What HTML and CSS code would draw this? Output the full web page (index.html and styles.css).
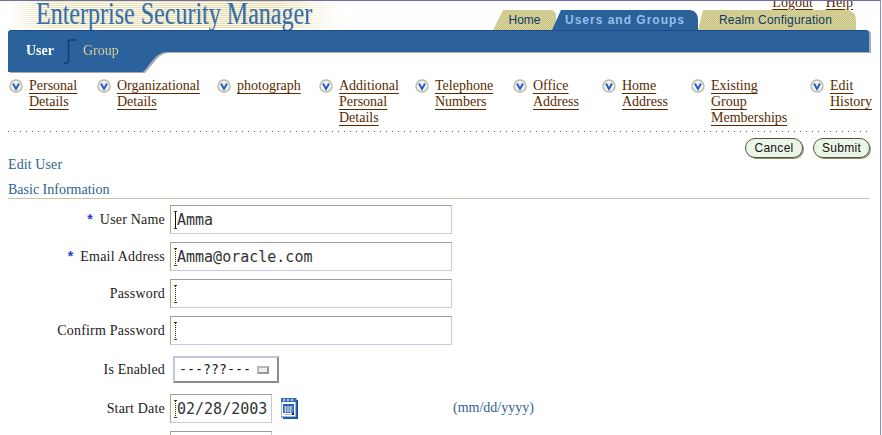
FILE: index.html
```html
<!DOCTYPE html>
<html lang="en">
<head>
<meta charset="utf-8">
<title>Enterprise Security Manager</title>
<link rel="stylesheet" href="styles.css">
</head>
<body>
<svg class="defs" width="0" height="0" aria-hidden="true">
  <defs>
    <symbol id="chev" viewBox="0 0 14 14">
      <circle cx="7" cy="7" r="6" fill="#eef2f8" stroke="#bdb99a" stroke-width="1.4"/>
      <path d="M4 4.5 L7 10 L10 4.5" fill="none" stroke="#2a5fc0" stroke-width="2"/>
    </symbol>
    <symbol id="cal" viewBox="0 0 17 21">
      <rect x="2" y="2" width="15" height="19" fill="#1d4f96"/>
      <rect x="0" y="0" width="15" height="19" fill="#fff" stroke="#3a70b0" stroke-width="1"/>
      <rect x="0" y="0" width="15" height="4" fill="#3a70b0"/>
      <path d="M2 1h2v2H2zM6 1h2v2H6zM10 1h2v2h-2z" fill="#b8d0ee"/>
      <rect x="2" y="6" width="11" height="9" fill="#2a62a8"/>
      <path d="M3 9h9M3 11h9M3 13h9M4.500 8v7M7 8v7M9.500 8v7" stroke="#d8e4f4" stroke-width=".8"/>
      <rect x="4" y="16" width="7" height="1" fill="#9cb8dc"/>
      <rect x="11" y="15" width="2" height="2" fill="#123"/>
    </symbol>
  </defs>
</svg>
<header class="top">
  <div class="logo"><span class="logo-text">Enterprise Security Manager</span></div>
  <div class="top-right">
    <div class="util"><a href="#">Logout</a><a href="#">Help</a></div>
    <nav class="tabs">
      <a class="tab tab-home" href="#">Home</a>
      <a class="tab tab-users" href="#">Users and Groups</a>
      <a class="tab tab-realm" href="#">Realm Configuration</a>
    </nav>
  </div>
</header>
<div class="bar-wrap">
  <div class="bar">
    <span class="sub-active">User</span>
    <svg class="sub-sep" width="12" height="25" viewBox="0 0 12 25"><path d="M0 24H3Q4.500 24 4.500 22V3Q4.500 1 6.500 1H12" fill="none" stroke="#123a80" stroke-width="1.500"/></svg>
    <span class="sub-link">Group</span>
  </div>
</div>
<nav class="sections">
  <div class="sec"><svg class="chev"><use href="#chev"/></svg><a href="#">Personal<br>Details</a></div>
  <div class="sec"><svg class="chev"><use href="#chev"/></svg><a href="#">Organizational<br>Details</a></div>
  <div class="sec"><svg class="chev"><use href="#chev"/></svg><a href="#">photograph</a></div>
  <div class="sec"><svg class="chev"><use href="#chev"/></svg><a href="#">Additional<br>Personal<br>Details</a></div>
  <div class="sec"><svg class="chev"><use href="#chev"/></svg><a href="#">Telephone<br>Numbers</a></div>
  <div class="sec"><svg class="chev"><use href="#chev"/></svg><a href="#">Office<br>Address</a></div>
  <div class="sec"><svg class="chev"><use href="#chev"/></svg><a href="#">Home<br>Address</a></div>
  <div class="sec"><svg class="chev"><use href="#chev"/></svg><a href="#">Existing<br>Group<br>Memberships</a></div>
  <div class="sec"><svg class="chev"><use href="#chev"/></svg><a href="#">Edit<br>History</a></div>
</nav>
<main class="content">
  <div class="dots"></div>
  <div class="actions">
    <button class="pill pill-cancel" type="button">Cancel</button>
    <button class="pill pill-submit" type="button">Submit</button>
  </div>
  <h1 class="page-title">Edit User</h1>
  <h2 class="section-title">Basic Information</h2>
  <form class="form">
    <label class="lbl"><span class="req">*</span>User Name</label>
    <div class="field"><span class="caret caret-solid"></span><input class="txt" type="text" value="Amma"></div>
    <label class="lbl"><span class="req">*</span>Email Address</label>
    <div class="field"><span class="caret"></span><input class="txt" type="text" value="Amma@oracle.com"></div>
    <label class="lbl">Password</label>
    <div class="field"><span class="caret"></span><input class="txt" type="text"></div>
    <label class="lbl">Confirm Password</label>
    <div class="field"><span class="caret"></span><input class="txt" type="text"></div>
    <label class="lbl">Is Enabled</label>
    <div class="field"><div class="select"><span>---???---</span><i class="select-btn"></i></div></div>
    <label class="lbl">Start Date</label>
    <div class="field"><span class="caret"></span><input class="txt txt-date" type="text" value="02/28/2003"><svg class="cal"><use href="#cal"/></svg><span class="hint">(mm/dd/yyyy)</span></div>
    <label class="lbl">End Date</label>
    <div class="field"><span class="caret"></span><input class="txt txt-date" type="text"><svg class="cal"><use href="#cal"/></svg></div>
  </form>
</main>
</body>
</html>
```
FILE: styles.css
```css
html, body { margin: 0; padding: 0; overflow: hidden; background: #fff; }
body {
  width: 880px;
  height: 434px;
  border-top: 1px solid #7070a8;
  border-right: 1px solid #8c8cc4;
  font-family: "Liberation Serif", serif;
  font-size: 14px;
  color: #222;
}
.defs { position: absolute; }

.top { display: flex; justify-content: space-between; height: 29px; }
.logo {
  width: 332px;
  height: 27px;
  margin-left: 8px;
  padding-left: 28px;
  box-sizing: border-box;
  white-space: nowrap;
  background:
    linear-gradient(to right, #fff 0, rgba(255,255,255,.2) 12%, rgba(255,255,255,0) 80%, #fff 100%),
    repeating-linear-gradient(to bottom, #e6dcae 0 1px, #fbf8ea 1px 2px);
}
.logo-text {
  display: inline-block;
  font-size: 31px;
  line-height: 25px;
  color: #3a6ea8;
  text-shadow: 1px 0 0 rgba(58,110,168,.35);
  transform: scaleX(.775);
  transform-origin: left center;
}
.top-right { display: flex; flex-direction: column; align-items: flex-end; margin-right: 24px; }
.util {
  display: flex;
  align-items: flex-end;
  justify-content: flex-end;
  gap: 13px;
  height: 9px;
  padding-right: 3px;
  overflow: hidden;
}
.util a { color: #5a2a00; text-decoration: underline; text-underline-offset: 2px; line-height: 14px; flex: none; }
.tabs { display: flex; height: 20px; }
.tab {
  display: flex;
  align-items: center;
  justify-content: center;
  box-sizing: border-box;
  height: 20px;
  font-family: "Liberation Sans", sans-serif;
  font-size: 12px;
  text-decoration: none;
  color: #0f3a66;
  background: repeating-conic-gradient(#dcd69c 0 25%, #c6c286 0 50%) 0 0 / 2px 2px;
}
.tab-home { width: 63px; clip-path: path("M0 20L10 0H58Q62 0 63 5V20Z"); }
.tab-users {
  width: 146px;
  margin-left: -4px;
  font-weight: bold;
  letter-spacing: 1px;
  color: #93c0ea;
  background: repeating-conic-gradient(#2f69a6 0 25%, #26598f 0 50%) 0 0 / 2px 2px;
  clip-path: path("M0 20L9 0H138Q146 1 146 10V20Z");
}
.tab-realm {
  width: 158px;
  padding-right: 3px;
  letter-spacing: .2px;
  clip-path: path("M0 20L5 0H150Q158 2 158 10V20Z");
}

.bar-wrap { margin-left: 8px; width: 861px; filter: drop-shadow(2px 1px 0 #a9a8b4); }
.bar {
  display: flex;
  align-items: flex-start;
  height: 42px;
  padding: 10px 0 0 18px;
  box-sizing: border-box;
  background: repeating-conic-gradient(#2f69a6 0 25%, #265a92 0 50%) 0 0 / 2px 2px;
  border-top: 1px solid #1c4a88;
  clip-path: path("M0 3Q0 0 3 0H858Q861 0 861 3V22H160C148 22 146 30 135 42H0Z");
}
.sub-active { font-weight: bold; color: #fff; line-height: 20px; }
.sub-sep { margin: -2px 7px 0 10px; flex: none; }
.sub-link { color: #d6cf9a; line-height: 20px; }

.sections {
  display: grid;
  grid-template-columns: 88px 120px 102px 96px 98px 89px 89px 119px auto;
  margin-top: 6px;
  padding-left: 9px;
  height: 48px;
}
.sec { display: flex; gap: 6px; align-items: flex-start; }
.chev { width: 14px; height: 14px; flex: none; margin-top: 1px; }
.sec a {
  color: #5a2a00;
  line-height: 16px;
  text-decoration: underline;
  text-decoration-thickness: 1px;
  text-underline-offset: 3px;
  white-space: nowrap;
}

.content { padding: 0 10px 0 8px; }
.dots {
  margin-top: 5px;
  height: 1px;
  width: 860px;
  background: repeating-linear-gradient(to right, #3a7068 0 1px, transparent 1px 6px);
}
.actions { display: flex; justify-content: flex-end; gap: 10px; margin-top: 6px; height: 20px; }
.pill {
  height: 20px;
  padding: 0;
  border: 1px solid #55553a;
  border-radius: 10px;
  background: repeating-conic-gradient(#f6fbf0 0 25%, #e2f0e0 0 50%) 0 0 / 2px 2px;
  box-shadow: 1px 1px 0 #8a8a70;
  font-family: "Liberation Sans", sans-serif;
  font-size: 12px;
  letter-spacing: .3px;
  color: #111;
}
.pill-cancel { width: 58px; }
.pill-submit { width: 57px; }

.page-title { margin: 1px 0 0; font-size: 14px; font-weight: normal; line-height: 12px; letter-spacing: .1px; color: #2f5f8f; }
.section-title {
  margin: 11px 0 0;
  font-size: 14px;
  font-weight: normal;
  line-height: 16px;
  color: #2f5f8f;
  border-bottom: 1px solid #c9c5a2;
}

.form {
  display: grid;
  grid-template-columns: 157px 1fr;
  column-gap: 5px;
  row-gap: 8px;
  align-items: center;
  margin-top: 6px;
}
.lbl { text-align: right; color: #222; letter-spacing: .2px; }
.req { margin-right: 7px; font-family: "Liberation Sans", sans-serif; font-weight: bold; color: #2040d8; }
.field { position: relative; display: flex; align-items: center; }
.txt {
  box-sizing: border-box;
  width: 282px;
  height: 29px;
  margin: 0;
  padding: 0 4px 0 6px;
  border: 1px solid;
  border-color: #9c9c9c #c8c8e0 #c8c8e0 #a8a878;
  outline: none;
  background: #fff;
  font-family: "DejaVu Sans Mono", monospace;
  font-size: 15px;
  color: #333;
}
.txt-date { width: 102px; }
.caret {
  position: absolute;
  left: 4px;
  top: 6px;
  width: 3px;
  height: 16px;
  border-top: 1px solid #333;
  border-bottom: 1px solid #333;
  background: repeating-linear-gradient(to bottom, #222 0 1px, transparent 1px 2px) center / 1px 100% no-repeat;
}
.caret-solid { background: linear-gradient(#111, #111) center / 1px 100% no-repeat; }
.select {
  display: flex;
  align-items: center;
  justify-content: space-between;
  box-sizing: border-box;
  width: 106px;
  height: 27px;
  margin: 3px 0 3px 3px;
  padding: 0 8px 0 4px;
  border: 2px solid;
  border-color: #c4c4dc #8c8c8c #8c8c8c #c4c4dc;
  font-family: "DejaVu Sans Mono", monospace;
  font-size: 13.3px;
  white-space: nowrap;
  color: #222;
}
.select-btn {
  display: block;
  flex: none;
  width: 8px;
  height: 4px;
  border: 2px solid;
  border-color: #b8b8b8 #999 #999 #b8b8b8;
  background: #eee;
}
.cal { width: 17px; height: 21px; margin-left: 9px; flex: none; }
.hint { margin-left: 155px; margin-bottom: 2px; font-size: 14px; color: #2f5f8f; }
```
